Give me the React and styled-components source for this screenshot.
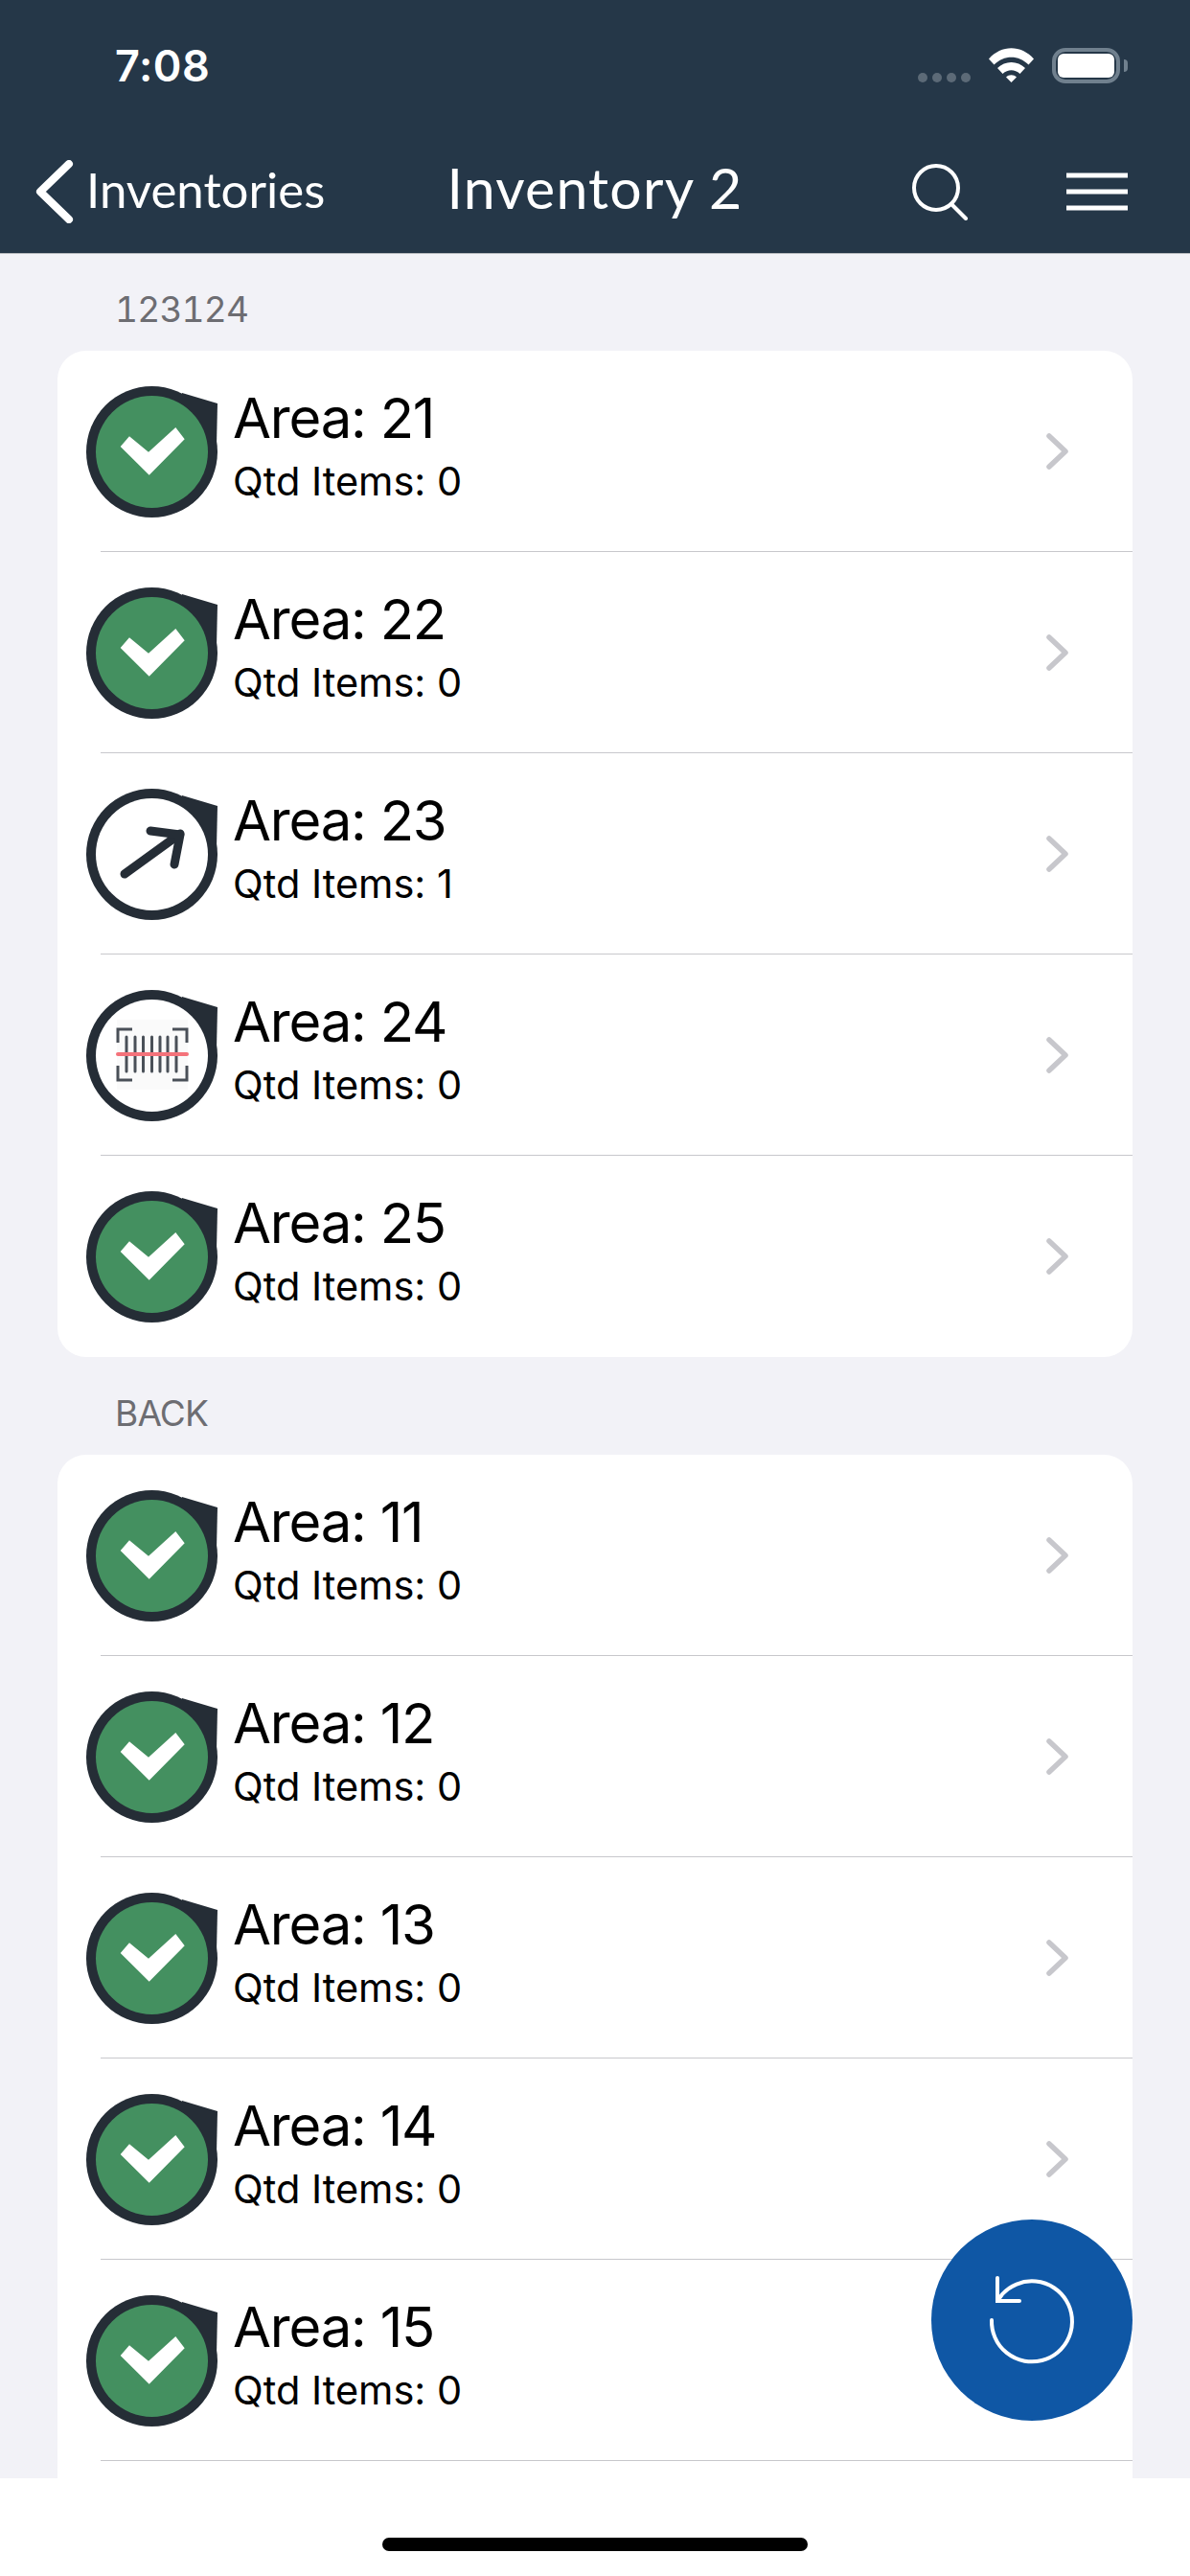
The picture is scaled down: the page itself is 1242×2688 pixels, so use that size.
import React from 'react';
import styled, { createGlobalStyle } from 'styled-components';

const GlobalStyle = createGlobalStyle`
html, body {
    margin: 0;
    padding: 0;
    background: #ffffff;
}
`;

const Screen = styled.div`
width: 1242px;
height: 2688px;
position: relative;
display: flex;
flex-direction: column;
overflow: hidden;
background: #ffffff;
font-family: Inter, "Liberation Sans", sans-serif;
`;

const Header = styled.header`
height: 264px;
flex-shrink: 0;
background: #253748;
color: #ffffff;
box-shadow: 0 1px 0 #b9bcc0;
z-index: 1;
`;

const StatusBar = styled.div`
height: 136px;
display: flex;
align-items: center;
justify-content: space-between;
padding: 0 65px 0 120px;
`;

const Clock = styled.span`
font-size: 45px;
font-weight: 600;
letter-spacing: 0.5px;
`;

const StatusIcons = styled.div`
display: flex;
align-items: center;
gap: 19px;
`;

const SignalDots = styled.div`
display: flex;
gap: 5px;
margin-top: 26px;
`;

const SignalDot = styled.i`
width: 10px;
height: 10px;
border-radius: 50%;
background: #5c6a77;
`;

const Battery = styled.div`
width: 71px;
height: 37px;
box-sizing: border-box;
border: 4px solid #70808e;
border-radius: 14px;
padding: 2px;
position: relative;
margin-right: 8px;

&::before {
    content: "";
    display: block;
    height: 100%;
    border-radius: 6px;
    background: #ffffff;
}

&::after {
    content: "";
    position: absolute;
    right: -12px;
    top: 8px;
    width: 4px;
    height: 13px;
    border-radius: 0 6px 6px 0;
    background: #70808e;
}
`;

const NavBar = styled.nav`
height: 128px;
box-sizing: border-box;
display: grid;
grid-template-columns: 1fr auto 1fr;
align-items: center;
padding: 0 36px;
`;

const BackLink = styled.div`
display: flex;
align-items: center;
gap: 12px;
font-family: Lato, "Liberation Sans", sans-serif;
font-size: 51px;
`;

const BackLabel = styled.span`
margin-top: -6px;
`;

const NavTitle = styled.h1`
margin: -10px 0 0;
font-family: Lato, "Liberation Sans", sans-serif;
font-size: 59px;
font-weight: 400;
letter-spacing: 1.2px;
`;

const NavActions = styled.div`
display: flex;
align-items: center;
justify-content: flex-end;
gap: 102px;
margin-right: 29px;
`;

const Content = styled.main`
flex: 1;
min-height: 0;
overflow: hidden;
background: #f2f2f7;
padding: 0 60px;
`;

const SectionLabel = styled.div`
height: 102px;
box-sizing: border-box;
padding: 0 0 21px 60px;
display: flex;
align-items: flex-end;
color: #6d6d72;
font-size: 37px;
font-variant-numeric: tabular-nums;
letter-spacing: -0.8px;
`;

const Card = styled.section`
background: #ffffff;
border-radius: ${(props) => (props.$open ? '30px 30px 0 0' : '30px')};
padding-bottom: ${(props) => (props.$open ? '40px' : '0')};
`;

const Row = styled.div`
height: 210px;
position: relative;
display: flex;
align-items: center;
padding: 0 67px 0 30px;

&::after {
    content: "";
    display: ${(props) => (props.$last ? 'none' : 'block')};
    position: absolute;
    left: 45px;
    right: 0;
    bottom: 0;
    height: 1px;
    background: #c8c8cc;
}
`;

const RowText = styled.div`
flex: 1;
margin: -13px 0 0 15px;
display: flex;
flex-direction: column;
gap: 8px;
`;

const AreaName = styled.div`
font-size: 58px;
line-height: 66px;
letter-spacing: -1.2px;
color: #000000;
`;

const ItemCount = styled.div`
font-size: 41.5px;
line-height: 50px;
color: #000000;
`;

const HomeBar = styled.footer`
height: 102px;
flex-shrink: 0;
display: flex;
justify-content: center;
align-items: flex-end;
padding-bottom: 26px;
box-sizing: border-box;
background: #ffffff;
`;

const HomeIndicator = styled.div`
width: 444px;
height: 14px;
border-radius: 7px;
background: #000000;
`;

const RefreshButton = styled.button`
position: absolute;
right: 60px;
bottom: 162px;
width: 210px;
height: 210px;
border: none;
border-radius: 50%;
padding: 0;
display: flex;
align-items: center;
justify-content: center;
background: #0f57a5;
z-index: 2;
`;

const DARK = '#252d36';

function WifiIcon() {
    return (
        <svg width="47" height="36" viewBox="0 0 47 36" fill="#ffffff">
            <path d="M0 11.5C13 -3.5 34 -3.5 47 11.5L41.5 17.5C31 7 16 7 5.5 17.5Z" />
            <path d="M9 21C17 13 30 13 38 21L32.5 27C27 22 20 22 14.5 27Z" />
            <path d="M18 30.5C21 27.5 26 27.5 29 30.5L23.5 36Z" />
        </svg>
    );
}

function BackChevron() {
    return (
        <svg width="42" height="66" viewBox="0 0 42 66" fill="none" stroke="#ffffff" strokeWidth="8" strokeLinecap="round" strokeLinejoin="round">
            <path d="M36 4L6 33L36 62" />
        </svg>
    );
}

function SearchIcon() {
    return (
        <svg width="60" height="60" viewBox="0 0 60 60" fill="none" stroke="#ffffff" strokeWidth="4" strokeLinecap="round">
            <circle cx="26" cy="26" r="23" />
            <path d="M42 43L57 58" />
        </svg>
    );
}

function MenuIcon() {
    return (
        <svg width="64" height="40" viewBox="0 0 64 40" fill="none" stroke="#ffffff" strokeWidth="5">
            <path d="M0 3H64M0 20H64M0 37H64" />
        </svg>
    );
}

function Chevron() {
    return (
        <svg width="23" height="38" viewBox="0 0 23 38" fill="none" stroke="#c7c7cc" strokeWidth="5.5" strokeLinecap="round" strokeLinejoin="round">
            <path d="M3 3L20 19L3 35" />
        </svg>
    );
}

function RefreshIcon() {
    return (
        <svg width="100" height="100" viewBox="0 0 100 100" fill="none" stroke="#ffffff" strokeWidth="4" strokeLinecap="round">
            <path d="M8 50A42 42 0 1 0 19 23L14 30" />
            <path d="M14 6V30H37" />
        </svg>
    );
}

function BarcodeMark() {
    const bars = [42, 51, 59.5, 68.5, 77, 85, 94];
    return (
        <g>
            <rect x="32" y="31" width="74" height="73" fill="#fafafa" />
            <path d="M33 55V41H48M90 41H105V55M33 79V94H48M90 94H105V79" fill="none" stroke="#4a5058" strokeWidth="3" />
            {bars.map((x) => (
                <path key={x} d={`M${x} 49V85`} stroke="#4a5058" strokeWidth="3" strokeLinecap="round" />
            ))}
            <path d="M33 67H105" stroke="#f4727a" strokeWidth="4" strokeLinecap="round" />
        </g>
    );
}

function Marker({ status }) {
    return (
        <svg width="138" height="137" viewBox="0 0 138 137" style={{ flexShrink: 0 }}>
            <circle cx="68.5" cy="68.5" r="68.5" fill={DARK} />
            <path d="M100 7L137 18L136 62L100 40Z" fill={DARK} />
            <circle cx="68.5" cy="68.5" r="58.5" fill={status === 'done' ? '#449060' : '#ffffff'} />
            {status === 'done' && (
                <path d="M35.7 63L45 52.3L65 68.7L93.3 43L102.7 55.3L65.7 92.7Z" fill="#ffffff" />
            )}
            {status === 'open' && (
                <g fill="none" stroke={DARK} strokeWidth="9" strokeLinecap="round" strokeLinejoin="round">
                    <path d="M40 89L98 47" />
                    <path d="M67 44L98 48L92 79" />
                </g>
            )}
            {status === 'scan' && <BarcodeMark />}
        </svg>
    );
}

const sections = [
    {
        title: '123124',
        areas: [
            { name: 21, items: 0, status: 'done' },
            { name: 22, items: 0, status: 'done' },
            { name: 23, items: 1, status: 'open' },
            { name: 24, items: 0, status: 'scan' },
            { name: 25, items: 0, status: 'done' },
        ],
    },
    {
        title: 'BACK',
        open: true,
        areas: [
            { name: 11, items: 0, status: 'done' },
            { name: 12, items: 0, status: 'done' },
            { name: 13, items: 0, status: 'done' },
            { name: 14, items: 0, status: 'done' },
            { name: 15, items: 0, status: 'done' },
        ],
    },
];

export default function App() {
    return (
        <Screen>
            <GlobalStyle />
            <Header>
                <StatusBar>
                    <Clock>7:08</Clock>
                    <StatusIcons>
                        <SignalDots>
                            <SignalDot />
                            <SignalDot />
                            <SignalDot />
                            <SignalDot />
                        </SignalDots>
                        <WifiIcon />
                        <Battery />
                    </StatusIcons>
                </StatusBar>
                <NavBar>
                    <BackLink>
                        <BackChevron />
                        <BackLabel>Inventories</BackLabel>
                    </BackLink>
                    <NavTitle>Inventory 2</NavTitle>
                    <NavActions>
                        <SearchIcon />
                        <MenuIcon />
                    </NavActions>
                </NavBar>
            </Header>
            <Content>
                {sections.map((section) => (
                    <div key={section.title}>
                        <SectionLabel>{section.title}</SectionLabel>
                        <Card $open={section.open}>
                            {section.areas.map((area, i) => (
                                <Row key={area.name} $last={!section.open && i === section.areas.length - 1}>
                                    <Marker status={area.status} />
                                    <RowText>
                                        <AreaName>Area: {area.name}</AreaName>
                                        <ItemCount>Qtd Items: {area.items}</ItemCount>
                                    </RowText>
                                    <Chevron />
                                </Row>
                            ))}
                        </Card>
                    </div>
                ))}
            </Content>
            <HomeBar>
                <HomeIndicator />
            </HomeBar>
            <RefreshButton>
                <RefreshIcon />
            </RefreshButton>
        </Screen>
    );
}
